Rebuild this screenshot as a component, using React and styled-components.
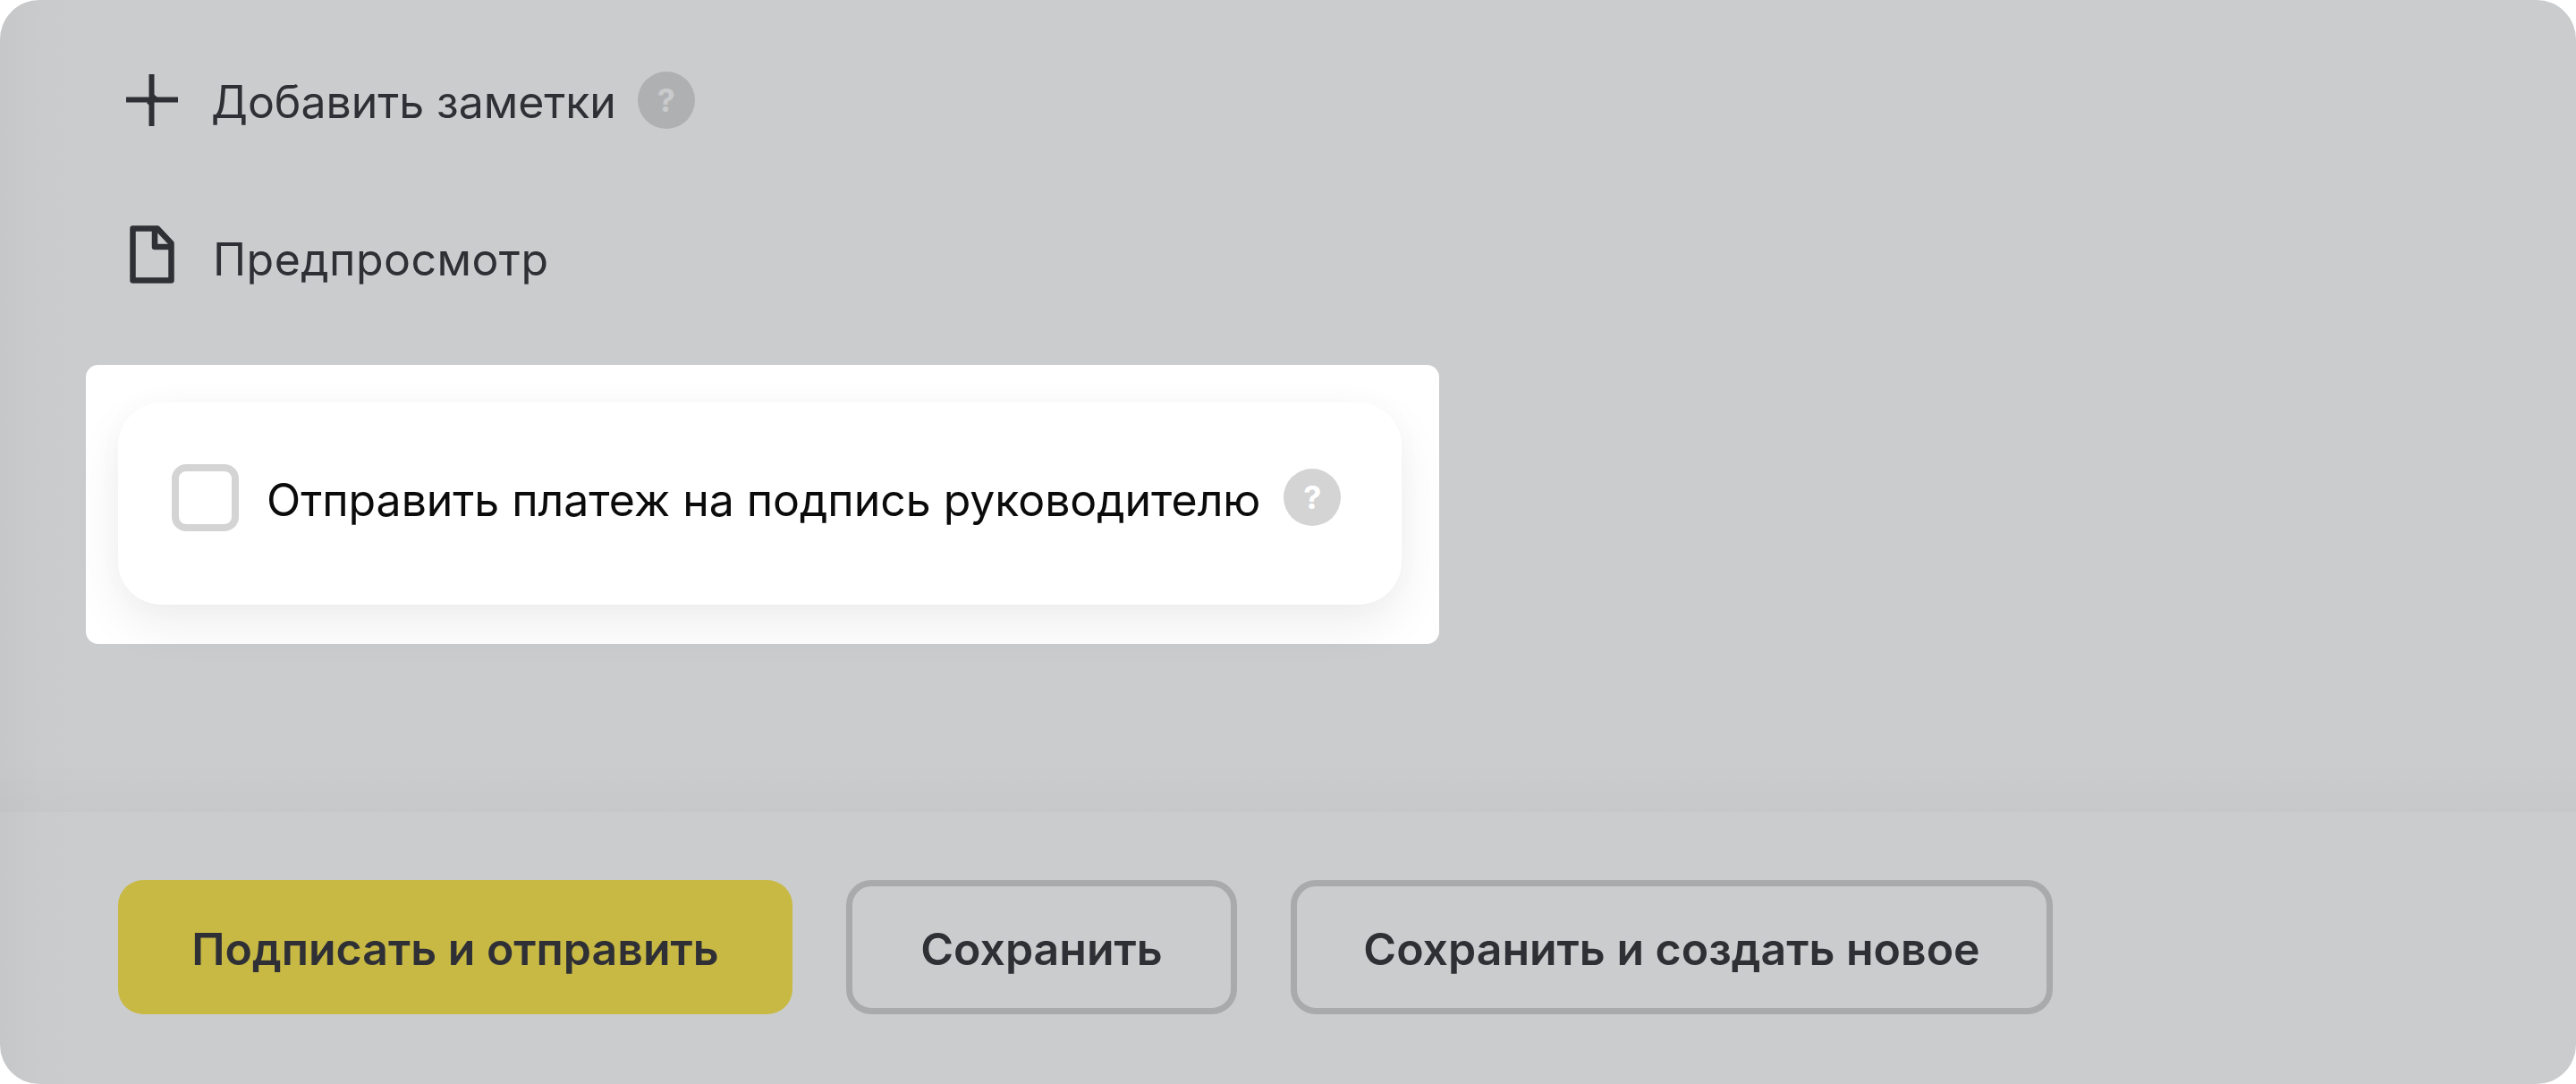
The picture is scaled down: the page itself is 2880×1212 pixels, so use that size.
import React from "react";
import styled, { createGlobalStyle } from "styled-components";

const Global = createGlobalStyle`
  html, body { margin: 0; padding: 0; background: #fff; }
  body { font-family: Inter, "Noto Sans", sans-serif; }
`;

const Panel = styled.div`
  width: 2880px;
  height: 1212px;
  border-radius: 44px;
  overflow: hidden;
  display: flex;
  flex-direction: column;
  background: linear-gradient(90deg, #c6c7c9 0, #cacbcd 50px, #cbccce 110px);
`;

const Main = styled.main`
  height: 908px;
  box-sizing: border-box;
  padding: 72px 0 0 132px;
  display: flex;
  flex-direction: column;
  align-items: flex-start;
  background: linear-gradient(180deg, transparent 0, transparent 850px, rgba(0, 0, 0, 0.02) 908px);
`;

const Row = styled.div`
  display: flex;
  align-items: center;
  height: 80px;
  margin-bottom: ${(p) => p.$after}px;
`;

const IconSlot = styled.span`
  width: 76px;
  margin-right: ${(p) => p.$gap}px;
  display: flex;
  justify-content: center;
  color: #2f3035;
`;

const RowLabel = styled.span`
  font-size: 50px;
  letter-spacing: ${(p) => p.$track}px;
  color: #2f3035;
  padding-top: ${(p) => p.$drop}px;
`;

const Help = styled.span`
  width: 64px;
  height: 64px;
  flex: none;
  border-radius: 50%;
  margin-left: ${(p) => p.$gap}px;
  background: ${(p) => p.$bg};
  color: ${(p) => p.$fg};
  display: flex;
  align-items: center;
  justify-content: center;
  font-size: 36px;
  font-weight: 700;
`;

const Spotlight = styled.section`
  margin-left: -36px;
  padding: 42px 42px 44px 36px;
  background: #fff;
  border-radius: 14px;
`;

const Card = styled.div`
  height: 226px;
  box-sizing: border-box;
  padding: 0 68px 14px 60px;
  display: flex;
  align-items: center;
  background: #fff;
  border-radius: 48px;
  box-shadow: 0 22px 54px rgba(0, 0, 0, 0.07), 0 0 36px rgba(0, 0, 0, 0.02);
`;

const Check = styled.span`
  width: 75px;
  height: 75px;
  flex: none;
  box-sizing: border-box;
  border: 8px solid #d4d4d5;
  border-radius: 16px;
  margin-right: 31px;
`;

const CardLabel = styled.span`
  font-size: 50px;
  letter-spacing: -0.05px;
  color: #0b0b0c;
  padding-top: 6px;
`;

const Footer = styled.footer`
  flex: 1;
  padding: 76px 0 0 132px;
  display: flex;
  align-items: flex-start;
  gap: 60px;
`;

const Button = styled.button`
  height: 150px;
  width: ${(p) => p.$w}px;
  box-sizing: border-box;
  padding: 4px 0 0;
  font-family: inherit;
  font-size: 50px;
  font-weight: 600;
  color: #2f3035;
  border-radius: 28px;
  border: ${(p) => (p.$primary ? "none" : "7px solid #a9aaac")};
  background: ${(p) => (p.$primary ? "#c8b945" : "transparent")};
`;

export default function App() {
  return (
    <>
      <Global />
      <Panel>
        <Main>
          <Row $after={92}>
            <IconSlot $gap={28}>
              <svg width="58" height="58" viewBox="0 0 58 58" fill="none" stroke="currentColor" strokeWidth="6">
                <path d="M0 28.500H58M28.500 0V58" />
                <path d="M24 31L30 36M28 22L34 27" strokeWidth="3" />
              </svg>
            </IconSlot>
            <RowLabel $drop={3} $track={-0.05}>Добавить заметки</RowLabel>
            <Help $gap={24} $bg="#afb0b2" $fg="#c9cacc">?</Help>
          </Row>
          <Row $after={84}>
            <IconSlot $gap={30}>
              <svg width="50" height="65" viewBox="0 0 50 65" fill="none" stroke="currentColor" strokeWidth="6.500" strokeLinejoin="round">
                <path d="M3.500 3.500H31L46.500 20V61.500H3.500Z" />
                <path d="M28 3.500V24H46.500" />
              </svg>
            </IconSlot>
            <RowLabel $drop={12} $track={0.45}>Предпросмотр</RowLabel>
          </Row>
          <Spotlight>
            <Card>
              <Check />
              <CardLabel>Отправить платеж на подпись руководителю</CardLabel>
              <Help $gap={26} $bg="#d4d4d5" $fg="#fff">?</Help>
            </Card>
          </Spotlight>
        </Main>
        <Footer>
          <Button $primary $w={754}>Подписать и отправить</Button>
          <Button $w={437}>Сохранить</Button>
          <Button $w={852}>Сохранить и создать новое</Button>
        </Footer>
      </Panel>
    </>
  );
}
